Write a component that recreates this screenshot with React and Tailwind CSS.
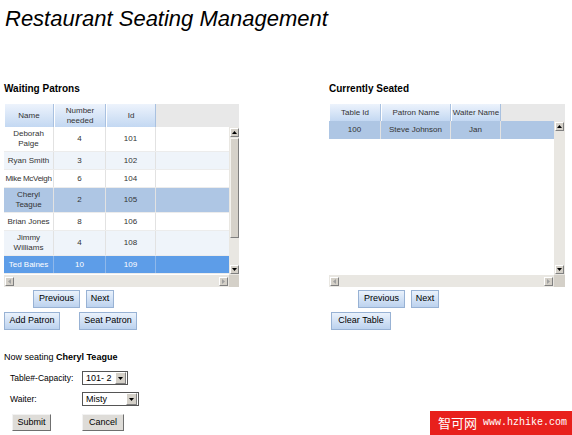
import React from "react";

function Arrow({ dir, dim }) {
  const pts = {
    up: "0,3 2.5,0 5,3",
    down: "0,0 2.5,3 5,0",
    left: "3,0 0,2.5 3,5",
    right: "0,0 3,2.5 0,5",
  }[dir];
  const vert = dir === "up" || dir === "down";
  return (
    <div className="w-[9px] h-[9px] shrink-0 bg-[#d4d0c8] border border-t-white border-l-white border-r-[#808080] border-b-[#808080] flex items-center justify-center">
      <svg width={vert ? 5 : 3} height={vert ? 3 : 5} viewBox={vert ? "0 0 5 3" : "0 0 3 5"}>
        <polygon points={pts} fill={dim ? "#a0a0a0" : "#000"} />
      </svg>
    </div>
  );
}

function VScroll({ thumb, w }) {
  return (
    <div className={`${w} bg-[#e9e7e2] flex flex-col items-center pt-[1px] pb-[1px]`}>
      <Arrow dir="up" />
      {thumb ? (
        <div className="w-[9px] h-[100px] mt-[1px] bg-[#d6d2ca] border border-t-[#f4f3ef] border-l-[#f4f3ef] border-r-[#7f7f7f] border-b-[#7f7f7f]" />
      ) : null}
      <div className="flex-1" />
      <Arrow dir="down" />
    </div>
  );
}

function HScroll({ w, cw }) {
  return (
    <div className="flex h-[12px]">
      <div className={`${w} bg-[#e9e7e2] flex items-center px-[1px]`}>
        <Arrow dir="left" dim />
        <div className="flex-1" />
        <Arrow dir="right" dim />
      </div>
      <div className={`${cw} bg-[#d4d0c8]`} />
    </div>
  );
}

function HeadCell({ w, children }) {
  return (
    <div
      className={`${w} h-full flex items-center justify-center text-center leading-[10px] text-[8px] text-[#333] bg-linear-to-b from-[#edf3fc] to-[#c3d8f2] border-l border-l-white border-r border-r-[#a9c1e0]`}
    >
      {children}
    </div>
  );
}

function Cell({ w, children, sel }) {
  return (
    <div
      className={`${w} h-full flex items-center justify-center text-center leading-[10px] whitespace-nowrap border-r ${
        sel ? "border-r-[#8fb8ea]" : "border-r-[#e2e2e2]"
      }`}
    >
      {children}
    </div>
  );
}

function BlueBtn({ children, w }) {
  return (
    <div
      className={`${w} h-[18px] flex items-center justify-center text-[9px] text-black border border-[#98b2d4] bg-linear-to-b from-[#eaf2fc] to-[#bcd2ee]`}
    >
      {children}
    </div>
  );
}

function GreyBtn({ children, w }) {
  return (
    <div
      className={`${w} h-[17px] flex items-center justify-center text-[9px] text-black bg-[#dedcd8] border border-t-[#f2f2f2] border-l-[#f2f2f2] border-r-[#6f6f6f] border-b-[#6f6f6f]`}
    >
      {children}
    </div>
  );
}

function Select({ w, value }) {
  return (
    <div className={`${w} h-[14px] flex items-center bg-white border border-[#555]`}>
      <div className="flex-1 pl-[3px] text-[9px] leading-[12px] text-black">{value}</div>
      <div className="w-[11px] h-[12px] mr-[1px] bg-[#d4d0c8] border border-t-white border-l-white border-r-[#808080] border-b-[#808080] flex items-center justify-center">
        <svg width="5" height="3" viewBox="0 0 5 3">
          <polygon points="0,0 2.5,3 5,0" fill="#000" />
        </svg>
      </div>
    </div>
  );
}

const waiting = [
  { n: ["Deborah", "Paige"], k: "4", id: "101", h: "h-[25px]", bg: "bg-white" },
  { n: ["Ryan Smith"], k: "3", id: "102", h: "h-[18px]", bg: "bg-[#eff4fa]" },
  { n: ["Mike McVeigh"], k: "6", id: "104", h: "h-[18px]", bg: "bg-white", tight: true },
  { n: ["Cheryl", "Teague"], k: "2", id: "105", h: "h-[25px]", bg: "bg-[#aec6e4]" },
  { n: ["Brian Jones"], k: "8", id: "106", h: "h-[18px]", bg: "bg-white" },
  { n: ["Jimmy", "Williams"], k: "4", id: "108", h: "h-[25px]", bg: "bg-[#eff4fa]" },
  { n: ["Ted Baines"], k: "10", id: "109", h: "h-[18px]", bg: "bg-[#5d9de8]", hi: true },
];

export default function App() {
  return (
    <div className="relative w-[572px] h-[435px] bg-white overflow-hidden font-['Liberation_Sans',Arial,sans-serif] text-[#222]">
      <div className="pt-[6px] pl-[5px] h-[32px] text-[22px] leading-[26px] italic text-black">
        Restaurant Seating Management
      </div>

      <div className="flex mt-[51px]">
        {/* Left column */}
        <div className="ml-[4px] w-[235px] flex flex-col">
          <div className="h-[12px] text-[10px] leading-[12px] font-bold text-black">Waiting Patrons</div>
          <div className="mt-[9px] w-[235px] h-[183px] flex flex-col">
            <div className="flex h-[23px] bg-[#e8e8e8]">
              <HeadCell w="w-[50px]">Name</HeadCell>
              <HeadCell w="w-[52px]">
                Number
                <br />
                needed
              </HeadCell>
              <HeadCell w="w-[50px]">Id</HeadCell>
            </div>
            <div className="flex flex-1">
              <div className="w-[225px] bg-white flex flex-col text-[8px] text-[#333]">
                {waiting.map((r, i) => (
                  <div
                    key={i}
                    className={`flex ${r.h} ${r.bg} ${r.hi ? "text-white" : ""} border-b border-b-[#ececec]`}
                  >
                    <Cell w="w-[50px]" sel={r.hi}>
                      <div className={r.tight ? "tracking-[-0.3px]" : ""}>
                        {r.n.map((t, j) => (
                          <div key={j}>{t}</div>
                        ))}
                      </div>
                    </Cell>
                    <Cell w="w-[52px]" sel={r.hi}>{r.k}</Cell>
                    <Cell w="w-[50px]" sel={r.hi}>{r.id}</Cell>
                  </div>
                ))}
              </div>
              <VScroll thumb w="w-[10px]" />
            </div>
            <HScroll w="w-[225px]" cw="w-[10px]" />
          </div>
          <div className="flex mt-[3px] pl-[29px] gap-[6px]">
            <BlueBtn w="w-[47px]">Previous</BlueBtn>
            <BlueBtn w="w-[28px]">Next</BlueBtn>
          </div>
          <div className="flex mt-[4px] gap-[19px]">
            <BlueBtn w="w-[56px]">Add Patron</BlueBtn>
            <BlueBtn w="w-[58px]">Seat Patron</BlueBtn>
          </div>

          <div className="mt-[21px] text-[9px] leading-[12px] text-black">
            Now seating <span className="font-bold">Cheryl Teague</span>
          </div>
          <div className="flex items-center mt-[8px] pl-[6px] h-[14px]">
            <div className="w-[72px] text-[8.5px] text-black">Table#-Capacity:</div>
            <Select w="w-[46px]" value="101- 2" />
          </div>
          <div className="flex items-center mt-[7px] pl-[6px] h-[14px]">
            <div className="w-[72px] text-[8.5px] text-black">Waiter:</div>
            <Select w="w-[57px]" value="Misty" />
          </div>
          <div className="flex mt-[8px] pl-[8px] gap-[31px]">
            <GreyBtn w="w-[39px]">Submit</GreyBtn>
            <GreyBtn w="w-[42px]">Cancel</GreyBtn>
          </div>
        </div>

        {/* Right column */}
        <div className="ml-[90px] w-[236px] flex flex-col">
          <div className="h-[12px] text-[10px] leading-[12px] font-bold text-black">Currently Seated</div>
          <div className="mt-[9px] w-[236px] h-[183px] flex flex-col">
            <div className="flex h-[17px] bg-[#e8e8e8]">
              <HeadCell w="w-[52px]">Table Id</HeadCell>
              <HeadCell w="w-[70px]">Patron Name</HeadCell>
              <HeadCell w="w-[50px]">Waiter Name</HeadCell>
            </div>
            <div className="flex flex-1">
              <div className="w-[225px] bg-white flex flex-col text-[8px] text-[#333]">
                <div className="flex h-[18px] bg-[#aec6e4]">
                  <Cell w="w-[52px]">100</Cell>
                  <Cell w="w-[70px]">Steve Johnson</Cell>
                  <Cell w="w-[50px]">Jan</Cell>
                </div>
              </div>
              <VScroll w="w-[11px]" />
            </div>
            <HScroll w="w-[225px]" cw="w-[11px]" />
          </div>
          <div className="flex mt-[3px] pl-[29px] gap-[6px]">
            <BlueBtn w="w-[47px]">Previous</BlueBtn>
            <BlueBtn w="w-[28px]">Next</BlueBtn>
          </div>
          <div className="flex mt-[4px] pl-[2px]">
            <BlueBtn w="w-[60px]">Clear Table</BlueBtn>
          </div>
        </div>
      </div>

      <div className="absolute left-[430px] top-[411px] w-[142px] h-[24px] bg-[#e8201c] flex items-center pl-[8px] text-white">
        <span className="text-[13px] leading-[24px] font-['Noto_Sans_CJK_SC',sans-serif]">智可网</span>
        <span className="ml-[6px] text-[10px] leading-[24px] font-['Liberation_Mono',monospace]">www.hzhike.com</span>
      </div>
    </div>
  );
}
